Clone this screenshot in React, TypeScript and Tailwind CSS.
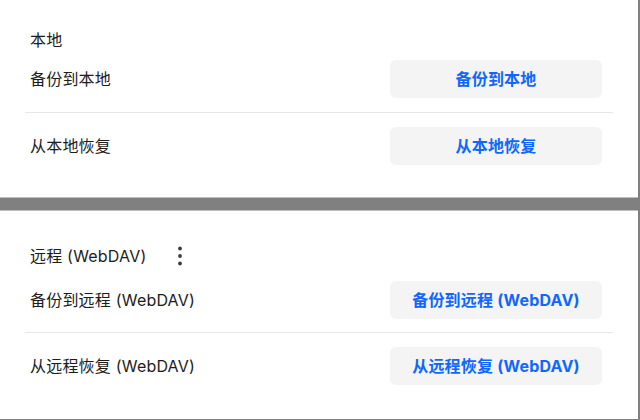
import React from 'react';

const font = { fontFamily: 'Inter, "Noto Sans CJK SC", sans-serif' };

function ActionButton({ label }: { label: string }) {
  return (
    <button
      type="button"
      className="w-[212px] h-[38px] rounded-[6px] bg-[#f4f4f4] text-[16px] font-bold text-[#0f67ff] leading-none tracking-[0.2px]"
    >
      {label}
    </button>
  );
}

function KebabIcon() {
  return (
    <svg width="6" height="20" viewBox="0 0 6 20" className="text-[#3c3c3c]">
      <circle cx="3" cy="2.5" r="1.9" fill="currentColor" />
      <circle cx="3" cy="10" r="1.9" fill="currentColor" />
      <circle cx="3" cy="17.5" r="1.9" fill="currentColor" />
    </svg>
  );
}

export default function App() {
  return (
    <div
      className="w-[640px] h-[420px] overflow-hidden bg-[#808080] flex flex-col text-[16px] text-[#1c1c1c] tracking-[0.2px]"
      style={font}
    >
      {/* local */}
      <section className="w-[638px] h-[198px] shrink-0 bg-white border-b border-[#bdbdbd] px-[25px] pt-[28px]">
        <div className="h-6 flex items-center pl-[5px]">本地</div>
        <div className="flex items-start justify-between pl-[5px] pr-[11px] pt-[8px] h-[61px] border-b border-[#e6e6e6]">
          <span className="h-[38px] flex items-center">备份到本地</span>
          <ActionButton label="备份到本地" />
        </div>
        <div className="flex items-start justify-between pl-[5px] pr-[11px] pt-[14px]">
          <span className="h-[38px] flex items-center">从本地恢复</span>
          <ActionButton label="从本地恢复" />
        </div>
      </section>

      {/* remote */}
      <section className="mt-[12px] w-[638px] h-[209px] shrink-0 bg-white border-t border-[#bdbdbd] px-[25px] pt-[25px]">
        <div className="h-10 flex items-center pl-[5px]">
          <span>远程 (WebDAV)</span>
          <button type="button" className="ml-[14px] w-10 h-10 flex items-center justify-center">
            <KebabIcon />
          </button>
        </div>
        <div className="flex items-start justify-between pl-[5px] pr-[11px] pt-[5px] h-[57px] border-b border-[#e6e6e6]">
          <span className="h-[38px] flex items-center">备份到远程 (WebDAV)</span>
          <ActionButton label="备份到远程 (WebDAV)" />
        </div>
        <div className="flex items-start justify-between pl-[5px] pr-[11px] pt-[14px]">
          <span className="h-[38px] flex items-center">从远程恢复 (WebDAV)</span>
          <ActionButton label="从远程恢复 (WebDAV)" />
        </div>
      </section>
    </div>
  );
}
